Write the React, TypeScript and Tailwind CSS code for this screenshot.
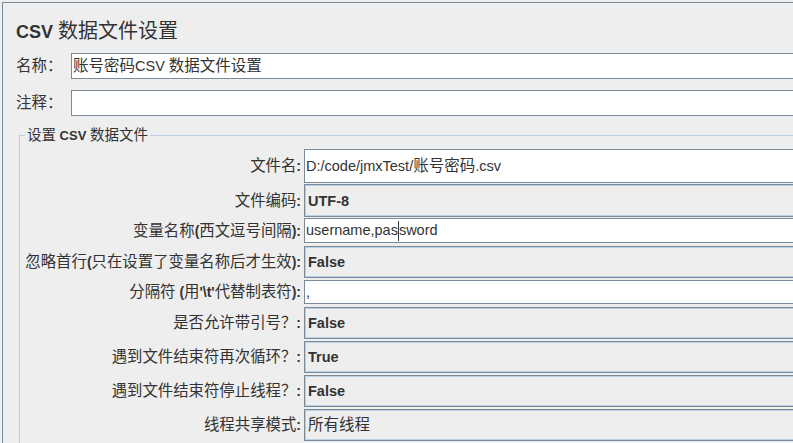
import React from "react";

const CJK = /([\u2e80-\u9fff\u3000-\u303f\uff00-\uffef]+)/;

interface MixedProps {
  text: string;
  latin: string;
  cjk: string;
}

// Swing renders the Latin part of a label in the bold dialog font and the
// CJK fallback in a plain, slightly larger face, so split the string.
function Mixed({ text, latin, cjk }: MixedProps) {
  return (
    <span>
      {text.split(CJK).map((part, i) =>
        part === "" ? null : (
          <span
            key={i}
            className={i % 2 ? `font-['Noto_Sans_CJK_SC',sans-serif] font-normal leading-none ${cjk}` : latin}
          >
            {part}
          </span>
        )
      )}
    </span>
  );
}

interface Row {
  label: string;
  value: string;
  kind: "text" | "combo";
  h: string;
  mt: string;
  caret?: number;
}

const rows: Row[] = [
  { label: "文件名:", value: "D:/code/jmxTest/账号密码.csv", kind: "text", h: "h-[34px]", mt: "mt-0" },
  { label: "文件编码:", value: "UTF-8", kind: "combo", h: "h-[33px]", mt: "mt-[1px]" },
  { label: "变量名称(西文逗号间隔):", value: "username,password", kind: "text", h: "h-[25px]", mt: "mt-[1px]", caret: 12 },
  { label: "忽略首行(只在设置了变量名称后才生效):", value: "False", kind: "combo", h: "h-[32px]", mt: "mt-[3px]" },
  { label: "分隔符 (用'\\t'代替制表符):", value: ",", kind: "text", h: "h-[24px]", mt: "mt-[2px]" },
  { label: "是否允许带引号？:", value: "False", kind: "combo", h: "h-[32px]", mt: "mt-[3px]" },
  { label: "遇到文件结束符再次循环？:", value: "True", kind: "combo", h: "h-[32px]", mt: "mt-[2px]" },
  { label: "遇到文件结束符停止线程？:", value: "False", kind: "combo", h: "h-[32px]", mt: "mt-[2px]" },
  { label: "线程共享模式:", value: "所有线程", kind: "combo", h: "h-[32px]", mt: "mt-[2px]" },
];

function FieldValue({ row }: { row: Row }) {
  if (row.caret !== undefined) {
    return (
      <span>
        <Mixed text={row.value.slice(0, row.caret)} latin="" cjk="text-[15.5px]" />
        <span className="inline-block w-px h-[20px] bg-[#333333] align-middle"></span>
        <Mixed text={row.value.slice(row.caret)} latin="" cjk="text-[15.5px]" />
      </span>
    );
  }
  return <Mixed text={row.value} latin={row.kind === "combo" ? "font-bold" : ""} cjk="text-[15.5px]" />;
}

export default function App() {
  return (
    <div className="w-[793px] h-[443px] overflow-hidden bg-[#eeeeee] text-[#333333] font-['Liberation_Sans','Noto_Sans_CJK_SC',sans-serif] text-[14px]">
      <div className="mt-[2px] ml-[2px] w-[900px] h-[460px] border-l border-t border-[#7a8a99]">
        <div className="pl-[13px] pt-[17px] leading-[24px] text-[18px]">
          <Mixed text="CSV 数据文件设置" latin="font-bold" cjk="text-[20px]" />
        </div>

        <div className="mt-[9px] flex items-center h-[26px]">
          <div className="w-[68px] pl-[13px] leading-[20px]">
            <Mixed text="名称：" latin="font-bold" cjk="text-[15.5px]" />
          </div>
          <div className="flex-1 h-full flex items-center bg-white border border-[#7a8a99] pl-[1px] leading-[20px] text-[14.5px]">
            <Mixed text="账号密码CSV 数据文件设置" latin="" cjk="text-[15.5px]" />
          </div>
        </div>

        <div className="mt-[11px] flex items-center h-[26px]">
          <div className="w-[68px] pl-[13px] leading-[20px]">
            <Mixed text="注释：" latin="font-bold" cjk="text-[15.5px]" />
          </div>
          <div className="flex-1 h-full bg-white border border-[#7a8a99]"></div>
        </div>

        <fieldset className="mt-[11px] ml-[16px] w-[880px] h-[400px] border border-[#b8cfe5] pt-[5px]">
          <legend className="ml-[5px] px-[2px] leading-[16px] text-[13px]">
            <Mixed text="设置 CSV 数据文件" latin="font-bold" cjk="text-[14.5px]" />
          </legend>
          <div className="flex flex-col">
            {rows.map((row) => (
              <div key={row.label} className={`flex ${row.h} ${row.mt}`}>
                <div className="w-[284px] pr-[3px] flex items-center justify-end whitespace-nowrap leading-[20px]">
                  <Mixed text={row.label} latin="font-bold" cjk="text-[15.4px]" />
                </div>
                <div
                  className={`flex-1 flex items-center whitespace-nowrap leading-[20px] text-[14.5px] border border-[#7a8a99] ${
                    row.kind === "text"
                      ? "bg-white pl-[1px]"
                      : "bg-[#eeeeee] pl-[3px] shadow-[inset_0_0_0_1px_#b8cfe5]"
                  }`}
                >
                  <FieldValue row={row} />
                </div>
              </div>
            ))}
          </div>
        </fieldset>
      </div>
    </div>
  );
}
